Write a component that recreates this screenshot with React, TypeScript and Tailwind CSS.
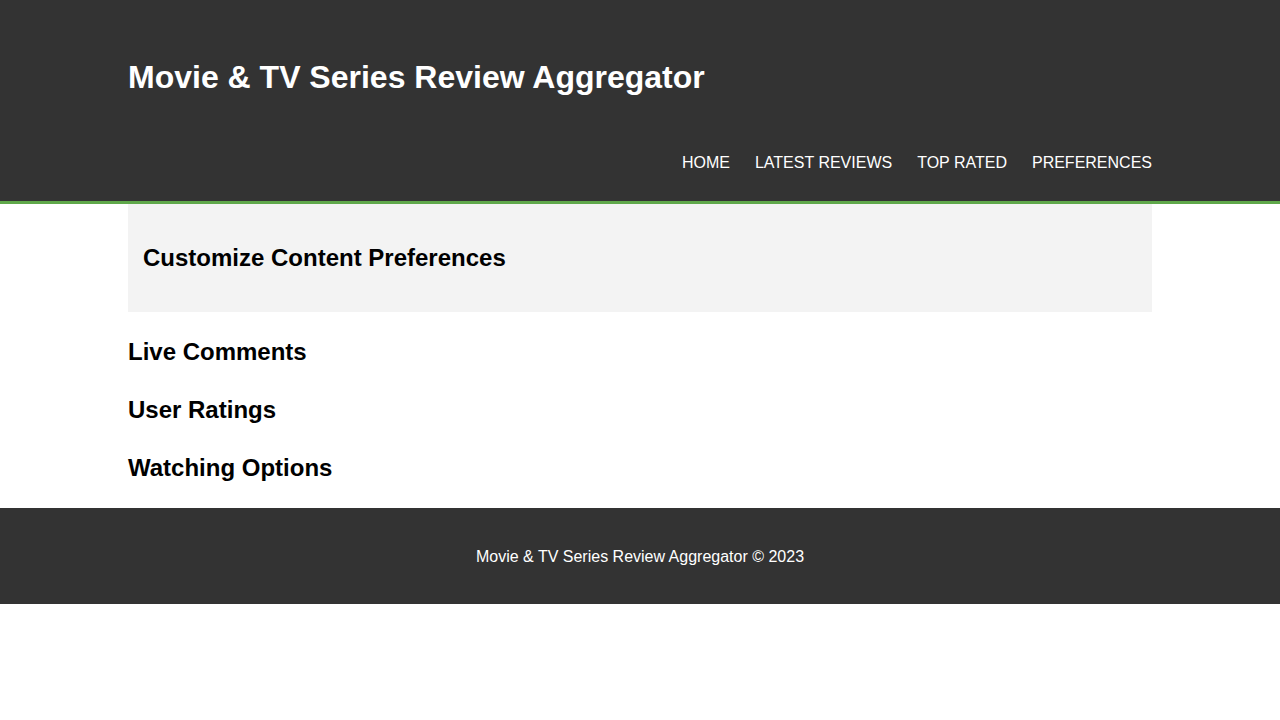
const navItems = ["HOME", "LATEST REVIEWS", "TOP RATED", "PREFERENCES"]

const sections = ["Live Comments", "User Ratings", "Watching Options"]

export default function App() {
    return (
        <div className="bg-white text-black font-['Liberation_Sans',Arial,sans-serif]">
            <header className="bg-[#333333] text-white border-b-[3px] border-[#5fa84a]">
                <div className="w-[80%] mx-auto pt-[59px] pb-[29px]">
                    <h1 className="text-[32px] leading-[37px] font-bold">
                        Movie &amp; TV Series Review Aggregator
                    </h1>
                    <nav className="mt-[58px]">
                        <ul className="flex justify-end gap-[25px] text-[16px] leading-[18px]">
                            {navItems.map(item => (
                                <li key={item}>
                                    <a href="#" className="text-white">{item}</a>
                                </li>
                            ))}
                        </ul>
                    </nav>
                </div>
            </header>

            <main className="w-[80%] mx-auto">
                <section className="bg-[#f3f3f3] px-[15px] py-[40px]">
                    <h2 className="text-[24px] leading-[28px] font-bold">Customize Content Preferences</h2>
                </section>

                <div className="flex flex-col gap-[30px] pt-[26px] pb-[26px]">
                    {sections.map(title => (
                        <section key={title}>
                            <h2 className="text-[24px] leading-[28px] font-bold">{title}</h2>
                        </section>
                    ))}
                </div>
            </main>

            <footer className="bg-[#333333] text-white text-center pt-[39px] pb-[38px]">
                <p className="text-[16px] leading-[19px]">Movie &amp; TV Series Review Aggregator © 2023</p>
            </footer>
        </div>
    )
}
